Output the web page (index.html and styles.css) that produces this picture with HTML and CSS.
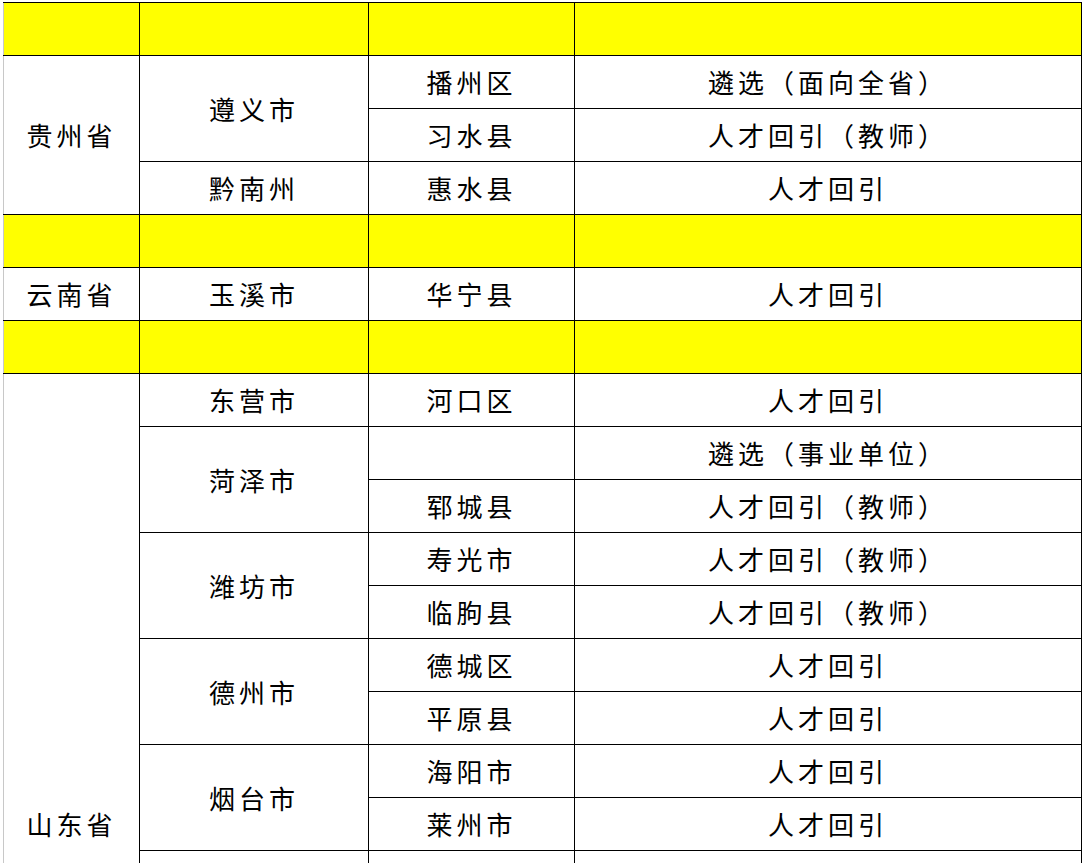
FILE: index.html
```html
<!DOCTYPE html>
<html lang="zh-CN">
<head>
<meta charset="utf-8">
<title>表格</title>
<link rel="stylesheet" href="styles.css">
</head>
<body>
<table class="sheet">
  <colgroup>
    <col class="c1"><col class="c2"><col class="c3"><col class="c4">
  </colgroup>
  <tbody>
    <tr class="hl"><td class="first"></td><td></td><td></td><td></td></tr>
    <tr><td class="first" rowspan="3">贵州省</td><td rowspan="2">遵义市</td><td>播州区</td><td>遴选（面向全省）</td></tr>
    <tr><td>习水县</td><td>人才回引（教师）</td></tr>
    <tr><td>黔南州</td><td>惠水县</td><td>人才回引</td></tr>
    <tr class="hl"><td class="first"></td><td></td><td></td><td></td></tr>
    <tr><td class="first">云南省</td><td>玉溪市</td><td>华宁县</td><td>人才回引</td></tr>
    <tr class="hl"><td class="first"></td><td></td><td></td><td></td></tr>
    <tr><td class="first" rowspan="17">山东省</td><td>东营市</td><td>河口区</td><td>人才回引</td></tr>
    <tr><td rowspan="2">菏泽市</td><td></td><td>遴选（事业单位）</td></tr>
    <tr><td>郓城县</td><td>人才回引（教师）</td></tr>
    <tr><td rowspan="2">潍坊市</td><td>寿光市</td><td>人才回引（教师）</td></tr>
    <tr><td>临朐县</td><td>人才回引（教师）</td></tr>
    <tr><td rowspan="2">德州市</td><td>德城区</td><td>人才回引</td></tr>
    <tr><td>平原县</td><td>人才回引</td></tr>
    <tr><td rowspan="2">烟台市</td><td>海阳市</td><td>人才回引</td></tr>
    <tr><td>莱州市</td><td>人才回引</td></tr>
    <tr><td></td><td></td><td></td></tr>
    <tr><td></td><td></td><td></td></tr>
    <tr><td></td><td></td><td></td></tr>
    <tr><td></td><td></td><td></td></tr>
    <tr><td></td><td></td><td></td></tr>
    <tr><td></td><td></td><td></td></tr>
    <tr><td></td><td></td><td></td></tr>
    <tr><td></td><td></td><td></td></tr>
  </tbody>
</table>
</body>
</html>
```
FILE: styles.css
```css
html, body {
  margin: 0;
  padding: 0;
  background: #ffffff;
}
body {
  padding: 2px 0 0 3px;
  font-family: "Noto Sans CJK SC", "Noto Sans", sans-serif;
  color: #000;
}
.sheet {
  border-collapse: collapse;
  table-layout: fixed;
  width: 1078px;
}
.c1 { width: 136px; }
.c2 { width: 229px; }
.c3 { width: 206px; }
.c4 { width: 507px; }
.sheet tr { height: 53px; }
.sheet td {
  border: 1px solid #000;
  padding: 0;
  text-align: center;
  vertical-align: middle;
  font-size: 26px;
  letter-spacing: 4px;
  line-height: 1;
  white-space: nowrap;
}
.sheet td.first {
  border-left-color: #c8c8c8;
}
.sheet tr.hl td {
  background: #ffff00;
}
```
